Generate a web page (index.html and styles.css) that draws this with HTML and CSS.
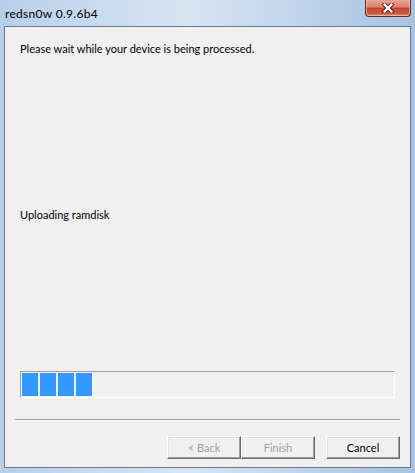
FILE: index.html
```html
<!DOCTYPE html>
<html>
<head>
<meta charset="utf-8">
<link rel="stylesheet" href="styles.css">
</head>
<body>
<div class="window">
  <div class="titlebar">
    <span class="title">redsn0w 0.9.6b4</span>
    <div class="close">
      <svg width="14" height="10" viewBox="0 0 14 10">
        <path d="M3.5 1.5 L10.5 8.5 M10.5 1.5 L3.5 8.5" stroke="#5a2018" stroke-width="4" stroke-linecap="square"/>
        <path d="M3.5 1.5 L10.5 8.5 M10.5 1.5 L3.5 8.5" stroke="#ffffff" stroke-width="2.2" stroke-linecap="square"/>
      </svg>
    </div>
  </div>
  <div class="panel">
    <p class="msg">Please wait while your device is being processed.</p>
    <p class="status">Uploading ramdisk</p>
    <div class="progress">
      <span class="block"></span><span class="block"></span><span class="block"></span><span class="block"></span>
    </div>
    <div class="sep"></div>
    <div class="buttons">
      <button class="btn disabled">&lt; Back</button>
      <button class="btn disabled">Finish</button>
      <button class="btn cancel">Cancel</button>
    </div>
  </div>
</div>
</body>
</html>
```
FILE: styles.css
```css
html, body {
  margin: 0;
  padding: 0;
}
body {
  width: 415px;
  height: 473px;
  overflow: hidden;
  font-family: Lato, "Liberation Sans", sans-serif;
}
.window {
  width: 415px;
  height: 473px;
  box-sizing: border-box;
  display: flex;
  flex-direction: column;
  background: linear-gradient(to right, #b8cfe8 0%, #c9dcf0 25%, #d7e5f4 45%, #c6d9ee 65%, #b3cbe6 85%, #a9c3e2 100%);
}
.titlebar {
  height: 26px;
  display: flex;
  justify-content: space-between;
  align-items: flex-start;
  padding: 0 4px 0 5px;
}
.title {
  font-size: 12px;
  letter-spacing: 0.3px;
  line-height: 15px;
  margin-top: 6px;
  color: #000;
}
.close {
  width: 44px;
  height: 17px;
  margin-top: -1px;
  border: 1px solid #6c2b22;
  border-top: none;
  border-radius: 0 0 4px 4px;
  background: linear-gradient(to bottom, #e8a896 0%, #d98470 45%, #c6432e 55%, #c85a3f 85%, #e39a7c 100%);
  display: flex;
  align-items: center;
  justify-content: center;
  box-shadow: inset 0 0 0 1px rgba(255,220,210,0.5);
}
.panel {
  margin: 0 4px 5px 4px;
  flex: 1;
  background: #f0f0f0;
  border: 1px solid #6b7a8a;
  padding: 14px 15px 0 15px;
  display: flex;
  flex-direction: column;
}
.msg, .status {
  margin: 0;
  font-size: 11px;
  line-height: 15px;
  color: #000;
}
.status {
  margin-top: 151px;
}
.progress {
  margin-top: 149px;
  height: 27px;
  box-sizing: border-box;
  border-top: 1px solid #a0a0a0;
  border-left: 1px solid #a0a0a0;
  border-bottom: 1px solid #ffffff;
  border-right: 1px solid #ffffff;
  padding: 1px;
  display: flex;
  gap: 2px;
}
.block {
  width: 16px;
  background: #3399ff;
}
.sep {
  margin: 21px -5px 0 -5px;
  height: 0;
  border-top: 1px solid #a0a0a0;
  border-bottom: 1px solid #ffffff;
}
.buttons {
  margin: 15px -5px 0 0;
  display: flex;
  justify-content: flex-end;
}
.btn {
  width: 74px;
  height: 23px;
  box-sizing: border-box;
  background: #f0f0f0;
  font-family: Lato, "Liberation Sans", sans-serif;
  font-size: 11px;
  color: #000;
  border-top: 1px solid #ffffff;
  border-left: 1px solid #ffffff;
  border-right: 1px solid #696969;
  border-bottom: 1px solid #696969;
  box-shadow: inset -1px -1px 0 #a0a0a0, inset 1px 1px 0 #e3e3e3;
  padding: 0;
  margin: 0;
}
.disabled {
  color: #a0a0a0;
}
.cancel {
  margin-left: 11px;
}
```
